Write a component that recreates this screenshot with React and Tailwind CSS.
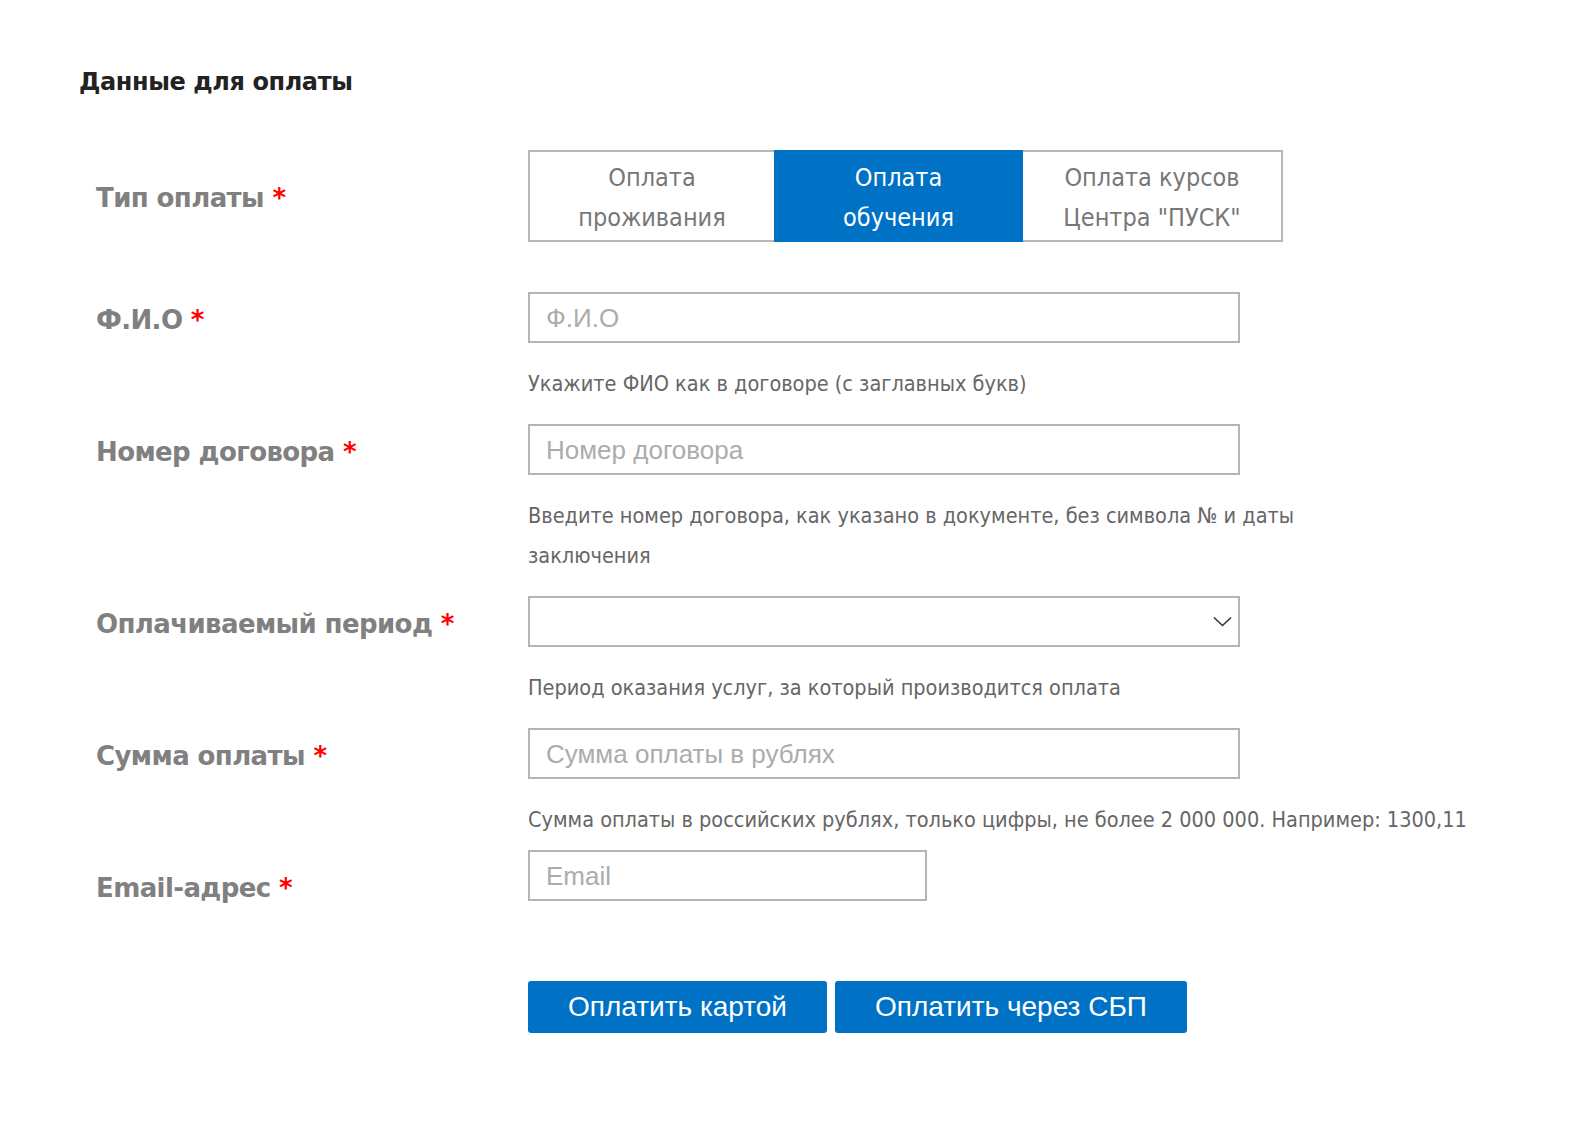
import { useState } from "react";

const tabs = [
    { id: "living", lines: ["Оплата", "проживания"], width: "w-[248px]" },
    { id: "study", lines: ["Оплата", "обучения"], width: "w-[249px]" },
    { id: "pusk", lines: ["Оплата курсов", "Центра \"ПУСК\""], width: "w-[262px]" },
];

const condensed = "font-['DejaVu_Sans_Condensed','Liberation_Sans_Narrow','DejaVu_Sans',sans-serif]";

function Label({ children, className = "pt-[4px]" }) {
    return (
        <div className={`w-[449px] shrink-0 pl-[17px] font-['DejaVu_Sans','Verdana',sans-serif] text-[26px] font-bold leading-[34px] tracking-[-0.6px] text-[#808080] ${className}`}>
            {children} <span className="text-[#ff0000]">*</span>
        </div>
    );
}

function Hint({ children, className = "mb-[20px]" }) {
    return (
        <div className={`ml-[449px] mt-[21px] ${condensed} text-[21.5px] leading-[40px] text-[#666666] ${className}`}>
            {children}
        </div>
    );
}

function TextField({ placeholder, className = "w-[712px]" }) {
    return (
        <input
            type="text"
            placeholder={placeholder}
            className={`${className} h-[51px] border-2 border-[#b5b5b5] bg-white px-[16px] pt-[2px] font-['Liberation_Sans',Arial,sans-serif] text-[26px] text-[#333] outline-none placeholder:text-[#acacac]`}
        />
    );
}

export default function App() {
    const [payType, setPayType] = useState("study");

    return (
        <div className="min-h-[1146px] bg-white pl-[79px] pt-[67px]">
            <h2 className="font-['DejaVu_Sans','Verdana',sans-serif] text-[24px] font-bold leading-[30px] tracking-[-0.4px] text-[#222222]">
                Данные для оплаты
            </h2>

            <div className="mt-[53px]">
                {/* тип оплаты */}
                <div className="flex items-center">
                    <Label>Тип оплаты</Label>
                    <div className="flex h-[92px]">
                        {tabs.map((tab, i) => {
                            const active = tab.id === payType;
                            return (
                                <button
                                    key={tab.id}
                                    type="button"
                                    onClick={() => setPayType(tab.id)}
                                    className={`${tab.width} ${i > 0 ? "-ml-[2px]" : ""} flex flex-col items-center justify-center border-2 pt-[4px] ${condensed} text-[25px] leading-[40px] ${
                                        active
                                            ? "relative z-10 border-[#0072c6] bg-[#0072c6] text-white"
                                            : "border-[#b8b8b8] bg-white text-[#777777]"
                                    }`}
                                >
                                    {tab.lines.map((line) => (
                                        <span key={line} className="whitespace-nowrap">{line}</span>
                                    ))}
                                </button>
                            );
                        })}
                    </div>
                </div>

                {/* ФИО */}
                <div className="mt-[50px] flex items-center">
                    <Label>Ф.И.О</Label>
                    <TextField placeholder="Ф.И.О" />
                </div>
                <Hint>Укажите ФИО как в договоре (с заглавных букв)</Hint>

                {/* номер договора */}
                <div className="flex items-center">
                    <Label>Номер договора</Label>
                    <TextField placeholder="Номер договора" />
                </div>
                <Hint>
                    <span className="whitespace-nowrap">Введите номер договора, как указано в документе, без символа № и даты</span>
                    <br />
                    заключения
                </Hint>

                {/* период */}
                <div className="flex items-center">
                    <Label>Оплачиваемый период</Label>
                    <div className="relative w-[712px]">
                        <select className="h-[51px] w-full appearance-none border-2 border-[#b5b5b5] bg-white px-[16px] font-['Liberation_Sans',Arial,sans-serif] text-[26px] text-[#333] outline-none">
                            <option value=""></option>
                        </select>
                        <svg
                            className="pointer-events-none absolute right-[8px] top-[20px] h-[11px] w-[19px]"
                            viewBox="0 0 19 11"
                            fill="none"
                            stroke="#333"
                            strokeWidth="1.6"
                        >
                            <path d="M1 1.5l8.5 8 8.5-8" />
                        </svg>
                    </div>
                </div>
                <Hint>Период оказания услуг, за который производится оплата</Hint>

                {/* сумма */}
                <div className="flex items-center">
                    <Label>Сумма оплаты</Label>
                    <TextField placeholder="Сумма оплаты в рублях" />
                </div>
                <Hint className="mb-[10px] whitespace-nowrap">
                    Сумма оплаты в российских рублях, только цифры, не более 2 000 000. Например: 1300,11
                </Hint>

                {/* email */}
                <div className="flex h-[51px] items-start">
                    <Label className="mt-[21px]">Email-адрес</Label>
                    <TextField placeholder="Email" className="w-[399px]" />
                </div>

                <div className="ml-[449px] mt-[80px] flex gap-[8px]">
                    <button
                        type="button"
                        className="h-[52px] rounded-[3px] bg-[#0072c6] px-[40px] font-['Liberation_Sans',Arial,sans-serif] text-[28px] text-white"
                    >
                        Оплатить картой
                    </button>
                    <button
                        type="button"
                        className="h-[52px] rounded-[3px] bg-[#0072c6] px-[40px] font-['Liberation_Sans',Arial,sans-serif] text-[28px] text-white"
                    >
                        Оплатить через СБП
                    </button>
                </div>
            </div>
        </div>
    );
}
